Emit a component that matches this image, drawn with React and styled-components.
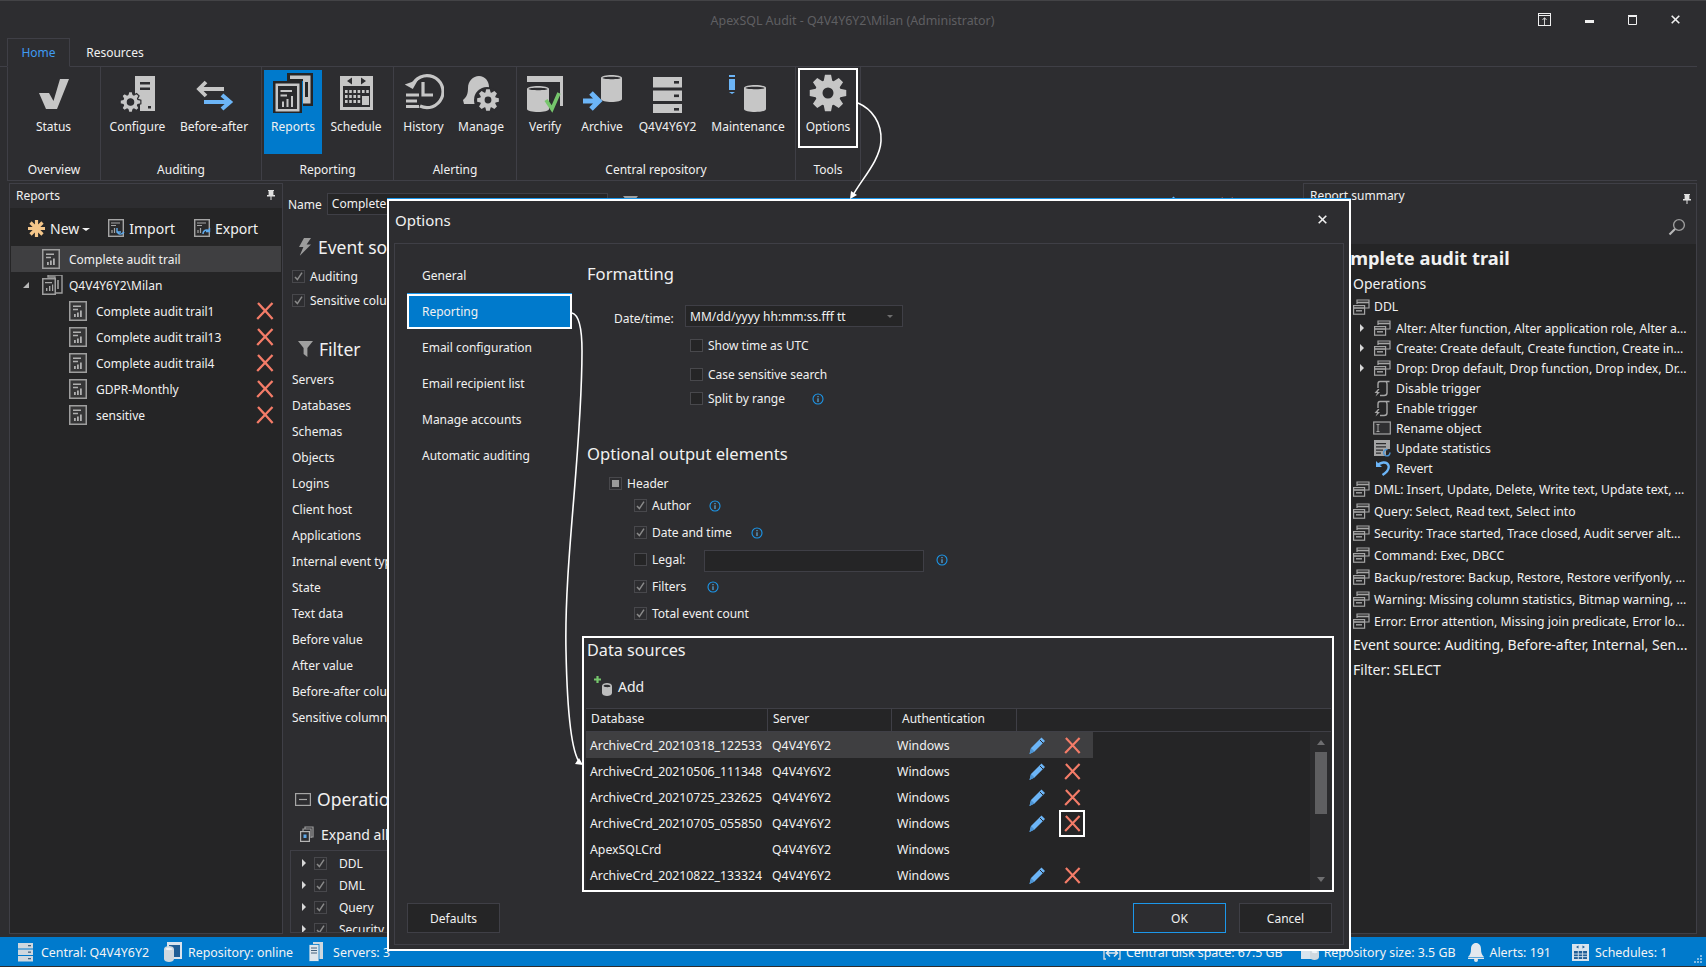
import React from "react";
import styled, { createGlobalStyle } from "styled-components";

const FONT = `"Noto Sans", "Open Sans", "Liberation Sans", sans-serif`;
const G = "#c6c6c6";
const BL = "#6cb5f7";
const RED = "#f47c68";
const BORDER = "#3f3f46";

const Global = createGlobalStyle`
  html, body { margin: 0; padding: 0; background: #2d2d30; }
  body { font-family: ${FONT}; font-size: 12px; color: #f1f1f1; }
  * { box-sizing: border-box; }
`;

const Page = styled.div`
  position: relative; width: 1706px; height: 967px; overflow: hidden;
  background: #2d2d30; display: flex; flex-direction: column; border-top: 1px solid #434346;
`;
const TitleBar = styled.div`
  height: 37px; flex: none; position: relative; display: flex; align-items: center; justify-content: center;
`;
const TitleText = styled.div`
  color: #5f5f62; font-size: 12.4px; margin-top: 1px; margin-left: -1px;
`;
const WinButtons = styled.div`
  position: absolute; right: 26px; top: 12px; display: flex; gap: 34px; align-items: center;
`;
const TabStrip = styled.div`
  height: 29px; flex: none; display: flex; padding-left: 7px; border-bottom: 1px solid ${BORDER}; margin-right: 9px;
`;
const Tab = styled.div`
  height: 29px; width: ${p => p.$w}px; display: flex; align-items: center; justify-content: center;
  color: ${p => (p.$active ? "#3f9bf2" : "#f1f1f1")}; font-size: 12px;
  border: 1px solid ${p => (p.$active ? BORDER : "transparent")}; border-bottom-color: ${p => (p.$active ? "#2d2d30" : "transparent")};
  padding-bottom: 1px;
`;
const Ribbon = styled.div`
  height: 114px; flex: none; display: flex; margin: 0 9px 0 7px; border-left: 1px solid ${BORDER}; border-bottom: 1px solid ${BORDER};
`;
const Group = styled.div`
  width: ${p => p.$w}px; height: 113px; display: flex; flex-direction: column; border-right: 1px solid ${BORDER};
`;
const GroupItems = styled.div`
  flex: 1; display: flex; padding-top: 3px; align-items: flex-start;
`;
const GroupLabel = styled.div`
  height: 19px; line-height: 18px; text-align: center; font-size: 12px; color: #f1f1f1; padding-bottom: 1px;
`;
const RibbonItem = styled.div`
  position: relative; width: ${p => p.$w}px; height: 84px; display: flex; flex-direction: column; align-items: center;
  background: ${p => (p.$active ? "#007acc" : "transparent")}; margin-left: ${p => p.$ml || 0}px; flex: none;
  ${p => p.$outlined && `&::after { content: ""; position: absolute; left: 0; right: 0; top: -2px; height: 76px; border: 2px solid #fff; }`}
`;
const RibbonIcon = styled.div`
  height: 40px; width: 44px; margin-top: 3px; display: flex; align-items: center; justify-content: center;
`;
const RibbonLabel = styled.div`
  margin-top: 5px; line-height: 18px; font-size: 12px; white-space: nowrap; color: #f1f1f1;
`;

const Main = styled.div`
  height: 756px; flex: none; display: flex; padding-top: 2px; padding-left: 9px; padding-right: 9px; align-items: flex-start;
`;
const PanelBox = styled.div`
  width: ${p => p.$w}px; height: 751px; flex: none; display: flex; flex-direction: column; overflow: hidden;
  background: ${p => p.$bg || "#252526"}; border: 1px solid ${BORDER};
`;
const PanelHead = styled.div`
  height: 24px; flex: none; display: flex; align-items: center; justify-content: space-between; padding: 0 7px 2px 6px; font-size: 12px; background: #2d2d30;
`;
const LeftToolbar = styled.div`
  height: 38px; flex: none; display: flex; align-items: center; padding: 2px 0 0 17px; background: #252526;
`;
const ToolLabel = styled.span`
  font-size: 14px; color: ${p => p.$c || "#f1f1f1"}; margin-left: 4px; margin-right: ${p => p.$mr || 0}px;
`;
const Caret = styled.span`
  width: 0; height: 0; border-left: 4px solid transparent; border-right: 4px solid transparent; border-top: 3px solid #f1f1f1; margin: 2px 0 0 3px;
`;
const ToolGap = styled.span`
  width: 18px; flex: none;
`;
const TreeRow = styled.div`
  height: 26px; display: flex; align-items: center; position: relative; padding-left: ${p => p.$pad}px; margin: 0 1px;
  background: ${p => (p.$sel ? "#3f3f41" : "transparent")}; font-size: 12px;
`;
const TreeLabel = styled.span`
  margin-left: ${p => p.$ml || 8}px; white-space: nowrap;
`;
const TreeDelete = styled.span`
  position: absolute; left: 245px; top: 4px; display: flex;
`;
const Expander = styled.span`
  position: absolute; left: ${p => p.$x}px; top: 50%; margin-top: -3px; width: 0; height: 0;
  border-style: solid; border-width: 0 0 6px 6px; border-color: transparent transparent #b8b8b8 transparent;
`;

const Center = styled.div`
  width: 1020px; height: 751px; flex: none; overflow: hidden; padding-left: 5px; display: flex; flex-direction: column;
`;
const NameRow = styled.div`
  margin-top: 10px; height: 22px; display: flex; align-items: center; flex: none; position: relative;
`;
const NameInput = styled.div`
  margin-left: 5px; width: 281px; height: 22px; border: 1px solid ${BORDER}; background: #252526; font-size: 12px; padding: 2px 4px; line-height: 16px;
`;
const NameExtras = styled.div`
  position: absolute; top: 0; height: 22px; left: ${p => p.$x}px; display: flex; align-items: center; gap: 6px; font-size: 12px;
`;
const BigHead = styled.div`
  display: flex; align-items: center; height: 30px; flex: none; margin-top: ${p => p.$mt}px; padding-left: ${p => p.$pad}px; font-size: 17.5px; white-space: nowrap; gap: ${p => p.$gap}px;
`;
const CheckLine = styled.div`
  height: 20px; display: flex; align-items: center; flex: none; gap: 5px; margin-top: ${p => p.$mt || 0}px; padding-left: ${p => p.$pad || 0}px; font-size: 12px; white-space: nowrap;
`;
const Box = styled.span`
  width: 13px; height: 13px; flex: none; display: flex; align-items: center; justify-content: center;
  border: 1px solid #48484c; background: ${p => (p.$state === "off" ? "#252526" : "#2d2d30")};
  ${p => p.$state === "mixed" && `&::after { content: ""; width: 7px; height: 7px; background: #9a9a9a; }`}
`;
const FilterList = styled.div`
  margin-top: 3px; padding-left: 4px; flex: none;
`;
const FilterRow = styled.div`
  height: 26px; line-height: 26px; font-size: 12px; white-space: nowrap;
`;
const ExpandLine = styled.div`
  margin-top: 10px; height: 20px; flex: none; display: flex; align-items: center; padding-left: 12px; gap: 7px; font-size: 14px; white-space: nowrap;
`;
const OpsTree = styled.div`
  margin: 6px 0 0 2px; height: 83px; flex: none; overflow: hidden; border: 1px solid ${BORDER}; padding-top: 1px; width: 300px;
`;
const OpsRow = styled.div`
  height: 22px; display: flex; align-items: center; position: relative; padding-left: 23px; font-size: 12px; gap: 12px;
`;
const OpsArrow = styled.span`
  position: absolute; left: 11px; top: 7px; width: 0; height: 0; border-style: solid; border-width: 4px 0 4px 4px; border-color: transparent transparent transparent #d8d8d8;
`;

const SummaryHead = styled.div`
  height: 60px; flex: none; background: #2d2d30; position: relative; font-size: 12px; padding: 3px 6px;
`;
const SumSearch = styled.div`
  position: absolute; right: 10px; top: 34px;
`;
const SumPin = styled.div`
  position: absolute; right: 5px; top: 7px;
`;
const SumBody = styled.div`
  flex: 1; background: #252526; padding-left: 48px; position: relative;
`;
const SumTitle = styled.div`
  font-size: 18.3px; font-weight: 700; line-height: 24px; margin: 2px 0 0 -25px; white-space: nowrap; color: #f1f1f1;
`;
const SumSub = styled.div`
  font-size: 14px; line-height: ${p => p.$lh || 22}px; margin-top: ${p => p.$mt}px; margin-left: 1px; white-space: nowrap; overflow: hidden; text-overflow: ellipsis; width: 340px;
`;
const SumRow = styled.div`
  height: ${p => p.$h}px; display: flex; align-items: center; position: relative; padding-left: ${p => p.$pad}px; font-size: 12.2px; white-space: nowrap; gap: 4px; width: 344px;
`;
const SumArrow = styled.span`
  position: absolute; left: 8px; top: 6px; width: 0; height: 0; border-style: solid; border-width: 4px 0 4px 4px; border-color: transparent transparent transparent #d8d8d8;
`;
const IcSlot = styled.span`
  width: 18px; display: flex; justify-content: center; flex: none; margin-right: 1px;
`;

const StatusBar = styled.div`
  height: 29px; flex: none; background: #007acc; display: flex; align-items: center; padding: 1px 0 0 18px; font-size: 12.4px; color: #f4f4f4; position: relative;
`;
const StatusItem = styled.div`
  display: flex; align-items: center; gap: ${p => p.$gap}px; margin-left: ${p => p.$ml || 0}px; white-space: nowrap;
`;
const Grip = styled.span`
  position: absolute; right: 4px; bottom: 3px; display: flex;
`;

/* Modal */
const Dialog = styled.div`
  position: absolute; left: 387px; top: 198px; width: 964px; height: 752px; background: #2d2d30;
  border: 2px solid #fff; box-shadow: 0 -1px 0 #1c97ea; display: flex; flex-direction: column; padding: 0 5px 4px 5px;
`;
const DialogHead = styled.div`
  height: 42px; flex: none; display: flex; align-items: center; justify-content: space-between; padding: 0 17px 5px 1px; font-size: 15px;
`;
const DialogFrame = styled.div`
  flex: 1; border: 1px solid ${BORDER}; display: flex; flex-direction: column;
`;
const DialogTop = styled.div`
  display: flex; height: 649px; flex: none;
`;
const Nav = styled.div`
  width: 177px; flex: none; padding: 14px 0 0 12px;
`;
const NavItem = styled.div`
  height: 36px; display: flex; align-items: center; padding: 0 0 1px 15px; font-size: 12px; white-space: nowrap;
  ${p => p.$active && `background: #007acc; border: 2px solid #fff; box-shadow: 0 -1px 0 #1c97ea; height: 35px; margin-bottom: 1px; padding-left: 13px;`}
`;
const Content = styled.div`
  flex: 1; padding: 18px 0 0 15px; display: flex; flex-direction: column; min-width: 0;
`;
const Heading = styled.div`
  height: 24px; line-height: 24px; font-size: 16.6px; color: #f1f1f1; flex: none; margin-top: ${p => p.$mt || 0}px; white-space: nowrap;
`;
const DateRow = styled.div`
  display: flex; align-items: center; height: 22px; margin-top: 19px; padding-left: 27px; flex: none; font-size: 12px;
`;
const DateLabel = styled.span`
  width: 71px; padding-top: 4px; flex: none;
`;
const Combo = styled.div`
  width: 218px; height: 22px; border: 1px solid ${BORDER}; background: #252526; display: flex; align-items: center; justify-content: space-between; padding: 0 9px 0 4px; font-size: 12px;
`;
const ComboCaret = styled.span`
  width: 0; height: 0; border-left: 3px solid transparent; border-right: 3px solid transparent; border-top: 3px solid #6e6e6e;
`;
const LegalInput = styled.div`
  width: 220px; height: 22px; border: 1px solid ${BORDER}; background: #252526; margin: 3px 0 0 14px;
`;
const InfoWrap = styled.span`
  display: flex; margin-left: ${p => p.$ml}px; margin-top: ${p => p.$mt || 2}px;
`;
const SourcesBox = styled.div`
  margin: 13px 0 0 -5px; width: 752px; height: 256px; flex: none; border: 2px solid #fff; display: flex; flex-direction: column;
`;
const SourcesHead = styled.div`
  height: 24px; line-height: 24px; font-size: 16.2px; padding-left: 3px; flex: none;
`;
const AddRow = styled.div`
  margin-top: 13px; height: 22px; padding-left: 10px; display: flex; align-items: center; gap: 5px; font-size: 14px; flex: none;
`;
const Table = styled.div`
  margin: 11px 1px 0 2px; display: flex; flex-direction: column; flex: 1; min-height: 0;
`;
const THead = styled.div`
  height: 24px; flex: none; display: grid; grid-template-columns: 182px 124px 125px 1fr; background: #252526; border-top: 1px solid ${BORDER}; border-bottom: 1px solid ${BORDER};
`;
const TH = styled.div`
  border-right: 1px solid ${BORDER}; padding-left: ${p => p.$pad}px; line-height: 20px; font-size: 12px;
  &:last-child { border-right: 0; }
`;
const TBody = styled.div`
  flex: 1; display: flex; min-height: 0; background: #252526; overflow: hidden;
`;
const Rows = styled.div`
  flex: 1; min-width: 0;
`;
const Row = styled.div`
  width: 507px; height: 26px; display: grid; grid-template-columns: 182px 124px 125px 76px; align-items: center; font-size: 12.3px;
  background: ${p => (p.$sel ? "#3f3f41" : "transparent")};
`;
const Cell = styled.div`
  padding-left: ${p => p.$pad}px; white-space: nowrap;
`;
const Actions = styled.div`
  display: flex; align-items: center; height: 26px; padding-left: 11px; position: relative;
`;
const DelBtn = styled.span`
  width: 26px; height: 27px; margin-left: 12px; display: flex; align-items: center; justify-content: center;
  border: 2px solid ${p => (p.$focus ? "#fff" : "transparent")};
`;
const Scrollbar = styled.div`
  width: 21px; flex: none; background: #2b2b2d; display: flex; flex-direction: column; align-items: center; padding-top: 8px;
`;
const ScrollUp = styled.span`
  width: 0; height: 0; border-left: 4px solid transparent; border-right: 4px solid transparent; border-bottom: 5px solid #6e6e70;
`;
const ScrollDown = styled.span`
  width: 0; height: 0; border-left: 4px solid transparent; border-right: 4px solid transparent; border-top: 5px solid #6e6e70; margin-top: 63px;
`;
const Thumb = styled.span`
  width: 12px; height: 62px; background: #5f5f61; margin-top: 7px;
`;
const DialogFoot = styled.div`
  flex: 1; display: flex; align-items: flex-start; padding: 10px 11px 0 12px;
`;
const Btn = styled.div`
  width: 93px; height: 30px; display: flex; align-items: center; justify-content: center; font-size: 12px;
  background: ${p => (p.$primary ? "#2d2d30" : "#252526")}; border: 1px solid ${p => (p.$primary ? "#1c97ea" : BORDER)};
  margin-left: ${p => p.$ml || 0}px;
`;
const Annotations = styled.svg`
  position: absolute; left: 0; top: 0; width: 1706px; height: 967px; pointer-events: none;
`;

/* ---------- icons ---------- */
function gearPath(cx, cy, R, r, hole, teeth = 8) {
  const pts = [];
  const n = teeth;
  for (let i = 0; i < n; i++) {
    const a = (i / n) * Math.PI * 2 - Math.PI / 2;
    const w = Math.PI / n;
    const p = (ang, rad) => `${(cx + Math.cos(ang) * rad).toFixed(2)} ${(cy + Math.sin(ang) * rad).toFixed(2)}`;
    pts.push(p(a - w * 0.85, r), p(a - w * 0.42, R), p(a + w * 0.42, R), p(a + w * 0.85, r));
  }
  return `M${pts.join("L")}Z M${cx - hole} ${cy}a${hole} ${hole} 0 1 0 ${hole * 2} 0a${hole} ${hole} 0 1 0 ${-hole * 2} 0Z`;
}
const Db = ({ x, y, w, h, c = G, top = "#2d2d30" }) => (
  <g>
    <path d={`M${x} ${y + 3}v${h - 6}c0 2 ${w / 4} 3 ${w / 2} 3s${w / 2} -1 ${w / 2} -3v${-(h - 6)}c0 -2 ${-w / 4} -3 ${-w / 2} -3s${-w / 2} 1 ${-w / 2} 3z`} fill={c} />
    <path d={`M${x + 1.5} ${y + 3}c1 1.6 ${w - 3} 1.6 ${w - 3} 0c-1 -1.6 ${-w + 3} -1.6 ${-w + 3} 0z`} fill={top} />
  </g>
);
const I = ({ children, w = 40, h = 40, vb }) => (
  <svg width={w} height={h} viewBox={vb || `0 0 ${w} ${h}`} fill="none">{children}</svg>
);

const IcStatus = () => <I><path d="M5 20H15L19.5 28L26 6H35L23 36H12Z" fill={G} /></I>;
const IcConfigure = () => (
  <I>
    <path d="M17 3H37V38H22V31L17 26Z" fill={G} />
    <path d="M22 9H32V11.5H22ZM22 14.5H32V17H22Z" fill="#2d2d30" />
    <rect x="30" y="33" width="3" height="2.5" fill="#2d2d30" />
    <path d={gearPath(12.5, 29, 10.5, 7.8, 3.2)} fill={G} stroke="#2d2d30" strokeWidth="1.2" fillRule="evenodd" />
  </I>
);
const IcBeforeAfter = () => (
  <I>
    <path d="M30 16H5M12 9L5 16L12 23" stroke={G} strokeWidth="3.8" />
    <path d="M10 29H36M28 22L36 29L28 36" stroke={BL} strokeWidth="4.2" />
  </I>
);
const IcReports = () => (
  <I>
    <path d="M14 0H40V33H30V8H14Z" fill="#252526" />
    <path d="M17 2.5H37.5V30.5H30V6H17Z" fill={G} />
    <path d="M32 9H35V24H32Z" fill="#252526" />
    <rect x="0" y="8" width="29" height="33" fill="#252526" />
    <rect x="2.5" y="10.5" width="24" height="28" fill={G} />
    <rect x="5" y="13" width="19" height="23" fill="#2a2a2c" />
    <path d="M7.5 17H19V19H7.5ZM7.5 21.5H14V23.5H7.5Z" fill={G} />
    <path d="M9 34V28.5H11V34ZM13.5 34V26H15.5V34ZM18 34V23H20V34Z" fill={G} />
  </I>
);
const IcSchedule = () => (
  <I>
    <path d="M4 3H37V37H4Z" fill={G} />
    <rect x="7" y="13" width="27" height="21" fill="#2d2d30" />
    <path d="M11 8L16 4.5V11.5ZM30 8L25 4.5V11.5Z" fill="#2d2d30" />
    {[0, 1, 2, 3].map(i => [0, 1, 2].map(j => (
      <rect key={`${i}${j}`} x={9 + i * 4.2} y={17 + j * 5} width="2.6" height="3" fill={G} />
    )))}
    <rect x="26" y="23" width="7" height="9" fill={G} />
    <rect x="26" y="17" width="2.6" height="3" fill={G} /><rect x="30.2" y="17" width="2.6" height="3" fill={G} />
  </I>
);
const IcHistory = () => (
  <I>
    <path d="M8 13A16 16 0 1 1 16 33" stroke={G} strokeWidth="3.2" />
    <path d="M1 10L8 16L15 8Z" fill={G} transform="rotate(-12 8 12)" />
    <path d="M19 9V22H29" stroke={G} strokeWidth="3.2" />
    <path d="M2 22H15M2 28H13M2 33.5H15" stroke={G} strokeWidth="3" />
  </I>
);
const IcManage = () => (
  <I>
    <path d="M2 27C6 24 7 20 7 15C7 8 12 3 18 3C24 3 28 8 28 14V27Z" fill={G} />
    <path d="M2 27H18V31H3Z" fill={G} />
    <circle cx="26" cy="27" r="13" fill="#2d2d30" />
    <path d={gearPath(27, 27, 11, 8, 3.4)} fill={G} fillRule="evenodd" />
  </I>
);
const IcVerify = () => (
  <I>
    <path d="M2 3H38V33H35V9H2Z" fill={G} />
    <Db x={2} y={13} w={22} h={26} />
    <path d="M21 27L27 36L34 20" stroke="#76c66c" strokeWidth="3.6" />
  </I>
);
const IcArchive = () => (
  <I>
    <Db x={19} y={2} w={21} h={27} />
    <path d="M1 28H15M9 20L17 28L9 36" stroke={BL} strokeWidth="5" />
  </I>
);
const IcServers = () => (
  <I>
    {[4, 17.5, 31].map(y => (
      <g key={y}>
        <rect x="5" y={y} width="29" height="10.5" fill={G} />
        <rect x="26" y={y + 4} width="5" height="2.6" fill="#2d2d30" />
      </g>
    ))}
  </I>
);
const IcMaint = () => (
  <svg width="44" height="40" viewBox="0 0 44 40" fill="none">
    <path d="M3 2H9V4H3Z" fill={BL} />
    <path d="M3 6H9V17H3Z" fill={BL} />
    <path d="M3 19H9L6 21Z" fill={BL} />
    <Db x={18} y={12} w={22} h={27} />
  </svg>
);
const IcOptions = () => (
  <I><path d={gearPath(20, 20, 18.5, 13, 5.5)} fill={G} fillRule="evenodd" /></I>
);

const IcRow = () => (
  <I w={20} h={20}>
    <rect x="1" y="0" width="18" height="20" fill="#9e9e9e" />
    <rect x="2.5" y="1.5" width="15" height="17" fill="#363637" />
    <path d="M5 4.5H13V6H5ZM5 7.8H10V9.2H5Z" fill="#b0b0b0" />
    <path d="M6 16V13H7.8V16ZM9 16V11.5H10.8V16ZM12 16V9.5H13.8V16Z" fill="#b0b0b0" />
  </I>
);
const IcRowStack = () => (
  <I w={22} h={20}>
    <path d="M7 0H21V18H14V2H7Z" fill="none" stroke="#9e9e9e" strokeWidth="1.4" />
    <rect x="1" y="3" width="14" height="17" fill="#9e9e9e" />
    <rect x="2.5" y="4.5" width="11" height="14" fill="#2b2b2c" />
    <path d="M4 7H11V8.2H4ZM5 16V13H6.4V16ZM8 16V11H9.4V16ZM11 16V9.5H12.2V16Z" fill="#a8a8a8" />
    <path d="M17 5V14" stroke="#a8a8a8" strokeWidth="1.5" />
  </I>
);
const IcX = ({ s = 18 }) => (
  <svg width={s} height={s} viewBox="0 0 18 18" fill="none">
    <path d="M2 1L9 8.6M16.5 1L1.2 17M9 8.6L16.6 17" stroke={RED} strokeWidth="2.3" />
  </svg>
);
const IcPencil = () => (
  <svg width="19" height="19" viewBox="0 0 19 19" fill="none">
    <path d="M13.5 1.5L17 5L6.5 15.5L1.5 18L3 12Z" fill={BL} />
    <path d="M12 4L15.5 7.5" stroke="#2b2b2d" strokeWidth="1" />
    <path d="M1.5 18L3 12L6.5 15.5Z" fill="#4c94d4" />
  </svg>
);
const Info = () => (
  <svg width="12" height="12" viewBox="0 0 12 12" fill="none">
    <circle cx="6" cy="6" r="5" stroke="#1c97ea" strokeWidth="1.1" />
    <path d="M6 3V4.2M6 5.2V9" stroke="#5fb6ef" strokeWidth="1.1" />
  </svg>
);
const Tick = () => (
  <svg width="11" height="11" viewBox="0 0 11 11" fill="none">
    <path d="M2 6L4.4 8.6L9 1.6" stroke="#8a8a8a" strokeWidth="1.5" />
  </svg>
);
const Pin = () => (
  <svg width="8" height="10" viewBox="0 0 8 10"><path d="M1 0H7V1H6.4V5H8V6.4H4.5V10H3.5V6.4H0V5H1.6V1H1Z" fill="#e0e0e0" /></svg>
);
const IcNew = () => (
  <svg width="19" height="19" viewBox="0 0 19 19" fill="none">
    <g stroke="#f5c78a" strokeWidth="3.2">
      <path d="M9.5 1V18M1 9.5H18M3.5 3.5L15.5 15.5M15.5 3.5L3.5 15.5" />
    </g>
  </svg>
);
const IcDocTool = ({ rev }) => (
  <svg width="17" height="19" viewBox="0 0 17 19" fill="none">
    <rect x="0.7" y="0.7" width="14.6" height="16.6" fill="#2b2b2c" stroke="#a5a5a5" strokeWidth="1.4" />
    <path d="M3 4H12M3 6.5H8" stroke="#a5a5a5" strokeWidth="1.1" />
    <path d="M4 14V11M6.5 14V9" stroke="#a5a5a5" strokeWidth="1.2" />
    <path d={rev ? "M9 15C9 11 13 10 15.5 12M15.5 9V12.5H12" : "M9 12C10 16 14 16 16 13M9 9V13H13"} stroke="#5fa9ea" strokeWidth="1.4" />
  </svg>
);
const IcStackS = () => (
  <svg width="18" height="16" viewBox="0 0 18 16" fill="none">
    <path d="M5 5V1H17V9H13" stroke="#a5a5a5" strokeWidth="1.2" />
    <path d="M5 3.5H17" stroke="#a5a5a5" strokeWidth="1.6" />
    <rect x="1.6" y="6.6" width="11" height="8.6" stroke="#a5a5a5" strokeWidth="1.2" />
    <path d="M1.6 9H12.6" stroke="#a5a5a5" strokeWidth="1.6" />
    <path d="M4 11.8H10" stroke="#a5a5a5" strokeWidth="1.4" />
  </svg>
);
const IcTrigger = () => (
  <svg width="18" height="17" viewBox="0 0 18 17" fill="none">
    <path d="M16.5 1.5H7C5.5 1.5 5 2.5 5 4V8M13 1.5C14.5 3 14 4 14 6V13C14 15 13 15.5 11 15.5H7" stroke="#a5a5a5" strokeWidth="1.4" />
    <path d="M5 9L1.5 13H4L2.5 16.5L7 12H4.5L6.5 9Z" fill="#a5a5a5" />
  </svg>
);
const IcRename = () => (
  <svg width="18" height="14" viewBox="0 0 18 14" fill="none">
    <rect x="0.7" y="1" width="16.6" height="12" fill="#2f2f31" stroke="#a5a5a5" strokeWidth="1.2" />
    <path d="M3.5 3.5H6.5M3.5 10.5H6.5M5 3.5V10.5" stroke="#a5a5a5" strokeWidth="1" />
  </svg>
);
const IcStats = () => (
  <svg width="18" height="17" viewBox="0 0 18 17" fill="none">
    <path d="M1 0H17V9H13V16H1Z" fill="#a5a5a5" />
    <path d="M3 3H13V4.3H3ZM3 6.2H13V7.5H3ZM3 9.4H10V10.7H3ZM3 12.4H8V13.7H3Z" fill="#2b2b2c" />
    <path d="M17 12.5A3.2 3.2 0 1 1 14.5 9.6" stroke="#4c94d4" strokeWidth="1.4" />
  </svg>
);
const IcRevert = () => (
  <svg width="18" height="18" viewBox="0 0 18 18" fill="none">
    <path d="M3 2V8H9Z" fill={BL} />
    <path d="M4 7C7 3 14 2 15.5 6.5C16.5 10 14 13 9.5 16" stroke={BL} strokeWidth="2.4" />
  </svg>
);
const IcBolt = () => (
  <svg width="14" height="18" viewBox="0 0 14 18"><path d="M6 0H13L8.6 6.4H13L1.6 18L5.4 9H1Z" fill="#9c9c9c" /></svg>
);
const IcFunnel = () => (
  <svg width="15" height="16" viewBox="0 0 15 16"><path d="M0 0H15L9.4 7V16L5.6 13V7Z" fill="#a0a0a0" /></svg>
);
const IcMinusBox = () => (
  <svg width="16" height="13" viewBox="0 0 16 13" fill="none">
    <rect x="0.6" y="0.6" width="14.8" height="11.8" stroke="#a5a5a5" strokeWidth="1.2" />
    <path d="M4 6.5H12" stroke="#a5a5a5" strokeWidth="1.2" />
  </svg>
);
const IcExpand = () => (
  <svg width="14" height="16" viewBox="0 0 14 16" fill="none">
    <path d="M5 3V1H13V11H11" stroke="#9e9e9e" strokeWidth="1.2" />
    <path d="M3 5V3H11V12" stroke="#9e9e9e" strokeWidth="1.2" />
    <rect x="0.6" y="5.6" width="8.8" height="9.8" fill="#2d2d30" stroke="#b5b5b5" strokeWidth="1.2" />
    <rect x="3.5" y="8.5" width="3" height="3.5" fill="#5fa9ea" />
  </svg>
);
const IcAdd = () => (
  <svg width="19" height="20" viewBox="0 0 19 20" fill="none">
    <path d="M3.5 0V7M0 3.5H7" stroke="#76c66c" strokeWidth="2.2" />
    <Db x={8} y={7} w={10} h={13} c="#bdbdbd" />
  </svg>
);
const IcSearch = () => (
  <svg width="18" height="18" viewBox="0 0 18 18" fill="none">
    <circle cx="11" cy="7" r="5.4" stroke="#9c9c9c" strokeWidth="1.4" />
    <path d="M7 11L1.5 16.5" stroke="#b8b8b8" strokeWidth="2.2" />
  </svg>
);
const WinPin = () => (
  <svg width="14" height="13" viewBox="0 0 14 13" fill="none" style={{ marginRight: -1 }}>
    <rect x="0.5" y="0.5" width="12" height="12" stroke="#f0f0f0" />
    <path d="M0.5 2.5H12.5" stroke="#f0f0f0" />
    <path d="M6.5 12V5M4.5 7L6.5 4.6L8.5 7" stroke="#d0d0d0" />
  </svg>
);
const WinMin = () => <svg width="9" height="3" viewBox="0 0 9 3" style={{ marginTop: 4 }}><rect width="9" height="3" fill="#f0f0f0" /></svg>;
const WinMax = () => (
  <svg width="9" height="10" viewBox="0 0 9 10" fill="none"><path d="M0.5 1.5H8.5V9.5H0.5Z" stroke="#f0f0f0" /><path d="M0 0.75H9" stroke="#f0f0f0" strokeWidth="1.5" /></svg>
);
const WinClose = ({ c = "#f0f0f0" }) => (
  <svg width="9" height="9" viewBox="0 0 9 9" fill="none"><path d="M0.7 0.7L8.3 8.3M8.3 0.7L0.7 8.3" stroke={c} strokeWidth="1.6" /></svg>
);
const StServers = () => (
  <svg width="15" height="19" viewBox="0 0 15 19">
    {[0, 6.5, 13].map(y => <g key={y}><rect y={y} width="15" height="5.5" fill="#cfd8df" /><rect x="10" y={y + 2} width="3" height="1.3" fill="#44607a" /></g>)}
  </svg>
);
const StRepo = () => (
  <svg width="18" height="20" viewBox="0 0 18 20" fill="none">
    <rect x="3" y="0" width="15" height="17" fill="#d8e4ee" />
    <rect x="5" y="3" width="11" height="12" fill="#1f5e96" />
    <Db x={0} y={4} w={10} h={16} c="#cfd8df" top="#eef3f7" />
  </svg>
);
const StTower = () => (
  <svg width="14" height="20" viewBox="0 0 14 20" fill="none">
    <rect x="4" y="0" width="10" height="17" fill="#cfd8df" />
    <rect x="0" y="2.5" width="10" height="17" fill="#dfe6ec" stroke="#007acc" strokeWidth="0.8" />
    <path d="M2 6H8M2 8.5H8M2 11H8" stroke="#44607a" strokeWidth="1" />
  </svg>
);
const StDisk = () => (
  <svg width="18" height="18" viewBox="0 0 18 18" fill="none">
    <path d="M1 4V16H3M17 4V16H15" stroke="#cfd8df" strokeWidth="1.4" />
    <path d="M4 10H14M7 6.5L3.5 10L7 13.5M11 6.5L14.5 10L11 13.5" stroke="#dfe6ec" strokeWidth="1.6" />
  </svg>
);
const StSize = () => (
  <svg width="18" height="16" viewBox="0 0 18 16" fill="none">
    <rect y="1" width="15" height="4" fill="#1f5e96" />
    <rect y="6" width="11" height="9" fill="#d8e4ee" />
    <Db x={9} y={5} w={9} h={11} c="#cfd8df" top="#eef3f7" />
  </svg>
);
const StBell = () => (
  <svg width="18" height="19" viewBox="0 0 18 19">
    <path d="M9 0C12 0 14 2.5 14 6C14 10 15 12 17 14H1C3 12 4 10 4 6C4 2.5 6 0 9 0Z" fill="#e2e8ee" />
    <rect x="1" y="14.6" width="16" height="1.4" fill="#e2e8ee" />
    <circle cx="9" cy="17" r="2" fill="#e2e8ee" />
  </svg>
);
const StSched = () => (
  <svg width="17" height="17" viewBox="0 0 17 17" fill="none">
    <rect width="17" height="17" fill="#d8e4ee" />
    <path d="M4 3L6.5 1.5V4.5ZM13 3L10.5 1.5V4.5Z" fill="#1f5e96" />
    <path d="M2 7H15V15H2Z" fill="#1f5e96" />
    <path d="M2 10H15M2 12.6H15M6.3 7V15M10.6 7V15" stroke="#d8e4ee" strokeWidth="0.9" />
  </svg>
);
const GripDots = () => (
  <svg width="9" height="9" viewBox="0 0 9 9" fill="#7fbbe6">
    <rect x="7" y="1" width="2" height="2" /><rect x="4" y="4" width="2" height="2" /><rect x="7" y="4" width="2" height="2" />
    <rect x="1" y="7" width="2" height="2" /><rect x="4" y="7" width="2" height="2" /><rect x="7" y="7" width="2" height="2" />
  </svg>
);

/* ---------- data ---------- */
const GROUPS = [
  { label: "Overview", w: 93, items: [{ l: "Status", w: 91, ic: <IcStatus /> }] },
  { label: "Auditing", w: 161, items: [{ l: "Configure", w: 73, ic: <IcConfigure /> }, { l: "Before-after", w: 80, ic: <IcBeforeAfter /> }] },
  { label: "Reporting", w: 132, items: [{ l: "Reports", w: 58, ic: <IcReports />, active: true, ml: 2 }, { l: "Schedule", w: 68, ic: <IcSchedule /> }] },
  { label: "Alerting", w: 123, items: [{ l: "History", w: 57, ic: <IcHistory />, ml: 1 }, { l: "Manage", w: 58, ic: <IcManage /> }] },
  { label: "Central repository", w: 279, items: [{ l: "Verify", w: 54, ic: <IcVerify />, ml: 1 }, { l: "Archive", w: 60, ic: <IcArchive /> }, { l: "Q4V4Y6Y2", w: 71, ic: <IcServers /> }, { l: "Maintenance", w: 90, ic: <IcMaint /> }] },
  { label: "Tools", w: 65, items: [{ l: "Options", w: 60, ic: <IcOptions />, outlined: true, ml: 2 }] },
];
const CHILD_REPORTS = ["Complete audit trail1", "Complete audit trail13", "Complete audit trail4", "GDPR-Monthly", "sensitive"];
const FILTERS = ["Servers", "Databases", "Schemas", "Objects", "Logins", "Client host", "Applications", "Internal event type", "State", "Text data", "Before value", "After value", "Before-after columns", "Sensitive columns"];
const OPS = ["DDL", "DML", "Query", "Security"];
const NAV = ["General", "Reporting", "Email configuration", "Email recipient list", "Manage accounts", "Automatic auditing"];
const SOURCES = [
  { db: "ArchiveCrd_20210318_122533", act: true, sel: true },
  { db: "ArchiveCrd_20210506_111348", act: true },
  { db: "ArchiveCrd_20210725_232625", act: true },
  { db: "ArchiveCrd_20210705_055850", act: true, focus: true },
  { db: "ApexSQLCrd" },
  { db: "ArchiveCrd_20210822_133324", act: true },
];
const SUM_SUB = [
  { i: <IcStackS />, t: "Alter: Alter function, Alter application role, Alter a...", a: true },
  { i: <IcStackS />, t: "Create: Create default, Create function, Create in...", a: true },
  { i: <IcStackS />, t: "Drop: Drop default, Drop function, Drop index, Dr...", a: true },
  { i: <IcTrigger />, t: "Disable trigger" },
  { i: <IcTrigger />, t: "Enable trigger" },
  { i: <IcRename />, t: "Rename object" },
  { i: <IcStats />, t: "Update statistics" },
  { i: <IcRevert />, t: "Revert" },
];
const SUM_TOP = [
  "DML: Insert, Update, Delete, Write text, Update text, ...",
  "Query: Select, Read text, Select into",
  "Security: Trace started, Trace closed, Audit server alt...",
  "Command: Exec, DBCC",
  "Backup/restore: Backup, Restore, Restore verifyonly, ...",
  "Warning: Missing column statistics, Bitmap warning, ...",
  "Error: Error attention, Missing join predicate, Error lo...",
];

const Check = ({ state = "on" }) => (
  <Box $state={state}>{state === "on" && <Tick />}</Box>
);

export default function App() {
  return (
    <Page>
      <Global />
      <TitleBar>
        <TitleText>ApexSQL Audit - Q4V4Y6Y2\Milan (Administrator)</TitleText>
        <WinButtons><WinPin /><WinMin /><WinMax /><WinClose /></WinButtons>
      </TitleBar>
      <TabStrip>
        <Tab $w={63} $active>Home</Tab>
        <Tab $w={90}>Resources</Tab>
      </TabStrip>
      <Ribbon>
        {GROUPS.map(g => (
          <Group key={g.label} $w={g.w}>
            <GroupItems>
              {g.items.map(it => (
                <RibbonItem key={it.l} $w={it.w} $ml={it.ml} $active={it.active} $outlined={it.outlined}>
                  <RibbonIcon>{it.ic}</RibbonIcon>
                  <RibbonLabel>{it.l}</RibbonLabel>
                </RibbonItem>
              ))}
            </GroupItems>
            <GroupLabel>{g.label}</GroupLabel>
          </Group>
        ))}
      </Ribbon>
      <Main>
        <PanelBox $w={274}>
          <PanelHead><span>Reports</span><Pin /></PanelHead>
          <LeftToolbar>
            <IcNew /><ToolLabel>New</ToolLabel><Caret />
            <ToolGap /><IcDocTool /><ToolLabel $mr={19}>Import</ToolLabel>
            <IcDocTool rev /><ToolLabel>Export</ToolLabel>
          </LeftToolbar>
          <TreeRow $pad={30} $sel><IcRow /><TreeLabel>Complete audit trail</TreeLabel></TreeRow>
          <TreeRow $pad={30}><Expander $x={12} /><IcRowStack /><TreeLabel $ml={6}>Q4V4Y6Y2\Milan</TreeLabel></TreeRow>
          {CHILD_REPORTS.map(r => (
            <TreeRow key={r} $pad={57}><IcRow /><TreeLabel>{r}</TreeLabel><TreeDelete><IcX /></TreeDelete></TreeRow>
          ))}
        </PanelBox>
        <Center>
          <NameRow>
            Name<NameInput>Complete audit trail</NameInput>
            <NameExtras $x={335}><IcFunnel /><span>Advanced</span></NameExtras>
            <NameExtras $x={872}><IcPencil /><span>Save</span></NameExtras>
            <NameExtras $x={932}><IcX s={14} /><span>Discard</span></NameExtras>
          </NameRow>
          <BigHead $mt={17} $pad={10} $gap={6}><IcBolt />Event source</BigHead>
          <CheckLine $mt={4} $pad={4}><Check /><span>Auditing</span></CheckLine>
          <CheckLine $mt={4} $pad={4}><Check /><span>Sensitive columns</span></CheckLine>
          <BigHead $mt={24} $pad={10} $gap={6}><IcFunnel />Filter</BigHead>
          <FilterList>
            {FILTERS.map(f => <FilterRow key={f}>{f}</FilterRow>)}
          </FilterList>
          <BigHead $mt={53} $pad={7} $gap={6}><IcMinusBox />Operations</BigHead>
          <ExpandLine><IcExpand />Expand all</ExpandLine>
          <OpsTree>
            {OPS.map(o => <OpsRow key={o}><OpsArrow /><Check /><span>{o}</span></OpsRow>)}
          </OpsTree>
        </Center>
        <PanelBox $w={394}>
          <SummaryHead>
            <span>Report summary</span>
            <SumPin><Pin /></SumPin>
            <SumSearch><IcSearch /></SumSearch>
          </SummaryHead>
          <SumBody>
            <SumTitle>Complete audit trail</SumTitle>
            <SumSub $mt={3}>Operations</SumSub>
            <SumRow $h={23} $pad={0}><IcStackS /><span>DDL</span></SumRow>
            {SUM_SUB.map(s => (
              <SumRow key={s.t} $h={20} $pad={21}>{s.a && <SumArrow />}<IcSlot>{s.i}</IcSlot>{s.t}</SumRow>
            ))}
            {SUM_TOP.map(t => (
              <SumRow key={t} $h={22} $pad={0}><IcStackS /><span>{t}</span></SumRow>
            ))}
            <SumSub $mt={1} $lh={24}>Event source: Auditing, Before-after, Internal, Sen...</SumSub>
            <SumSub $mt={1} $lh={24}>Filter: SELECT</SumSub>
          </SumBody>
        </PanelBox>
      </Main>
      <StatusBar>
        <StatusItem $gap={8}><StServers />Central: Q4V4Y6Y2</StatusItem>
        <StatusItem $gap={6} $ml={15}><StRepo />Repository: online</StatusItem>
        <StatusItem $gap={10} $ml={16}><StTower />Servers: 3</StatusItem>
        <StatusItem $gap={5} $ml={713}><StDisk />Central disk space: 67.5 GB</StatusItem>
        <StatusItem $gap={5} $ml={18}><StSize />Repository size: 3.5 GB</StatusItem>
        <StatusItem $gap={4} $ml={12}><StBell />Alerts: 191</StatusItem>
        <StatusItem $gap={6} $ml={21}><StSched />Schedules: 1</StatusItem>
        <Grip><GripDots /></Grip>
      </StatusBar>

      <Dialog>
        <DialogHead><span>Options</span><WinClose /></DialogHead>
        <DialogFrame>
          <DialogTop>
            <Nav>
              {NAV.map(n => <NavItem key={n} $active={n === "Reporting"}>{n}</NavItem>)}
            </Nav>
            <Content>
              <Heading>Formatting</Heading>
              <DateRow>
                <DateLabel>Date/time:</DateLabel>
                <Combo><span>MM/dd/yyyy hh:mm:ss.fff tt</span><ComboCaret /></Combo>
              </DateRow>
              <CheckLine $mt={8} $pad={103}><Check state="off" /><span>Show time as UTC</span></CheckLine>
              <CheckLine $mt={9} $pad={103}><Check state="off" /><span>Case sensitive search</span></CheckLine>
              <CheckLine $mt={4} $pad={103}><Check state="off" /><span>Split by range</span><InfoWrap $ml={22}><Info /></InfoWrap></CheckLine>
              <Heading $mt={34}>Optional output elements</Heading>
              <CheckLine $mt={7} $pad={22}><Check state="mixed" /><span>Header</span></CheckLine>
              <CheckLine $mt={2} $pad={47}><Check /><span>Author</span><InfoWrap $ml={13}><Info /></InfoWrap></CheckLine>
              <CheckLine $mt={7} $pad={47}><Check /><span>Date and time</span><InfoWrap $ml={14}><Info /></InfoWrap></CheckLine>
              <CheckLine $mt={7} $pad={47}><Check state="off" /><span>Legal:</span><LegalInput /><InfoWrap $ml={7}><Info /></InfoWrap></CheckLine>
              <CheckLine $mt={7} $pad={47}><Check /><span>Filters</span><InfoWrap $ml={16}><Info /></InfoWrap></CheckLine>
              <CheckLine $mt={7} $pad={47}><Check /><span>Total event count</span></CheckLine>
              <SourcesBox>
                <SourcesHead>Data sources</SourcesHead>
                <AddRow><IcAdd />Add</AddRow>
                <Table>
                  <THead>
                    <TH $pad={5}>Database</TH><TH $pad={5}>Server</TH><TH $pad={10}>Authentication</TH><TH />
                  </THead>
                  <TBody>
                    <Rows>
                      {SOURCES.map(s => (
                        <Row key={s.db} $sel={s.sel}>
                          <Cell $pad={4}>{s.db}</Cell>
                          <Cell $pad={4}>Q4V4Y6Y2</Cell>
                          <Cell $pad={5}>Windows</Cell>
                          <Actions>
                            {s.act && <><IcPencil /><DelBtn $focus={s.focus}><IcX s={17} /></DelBtn></>}
                          </Actions>
                        </Row>
                      ))}
                    </Rows>
                    <Scrollbar><ScrollUp /><Thumb /><ScrollDown /></Scrollbar>
                  </TBody>
                </Table>
              </SourcesBox>
            </Content>
          </DialogTop>
          <DialogFoot>
            <Btn>Defaults</Btn>
            <Btn $primary $ml={633}>OK</Btn>
            <Btn $ml={13}>Cancel</Btn>
          </DialogFoot>
        </DialogFrame>
      </Dialog>

      <Annotations viewBox="0 0 1706 967" fill="none">
        <path d="M858 102C872 108 882 122 881 140C880 160 860 180 852 196" stroke="#fff" strokeWidth="1.6" />
        <path d="M850 198L851 190L857 194Z" fill="#fff" />
        <path d="M572 312C580 314 582 330 582 350C582 450 564 560 566 650C567 700 570 750 580 762" stroke="#fff" strokeWidth="1.6" />
        <path d="M583 764L575 763L579 757Z" fill="#fff" />
      </Annotations>
    </Page>
  );
}
